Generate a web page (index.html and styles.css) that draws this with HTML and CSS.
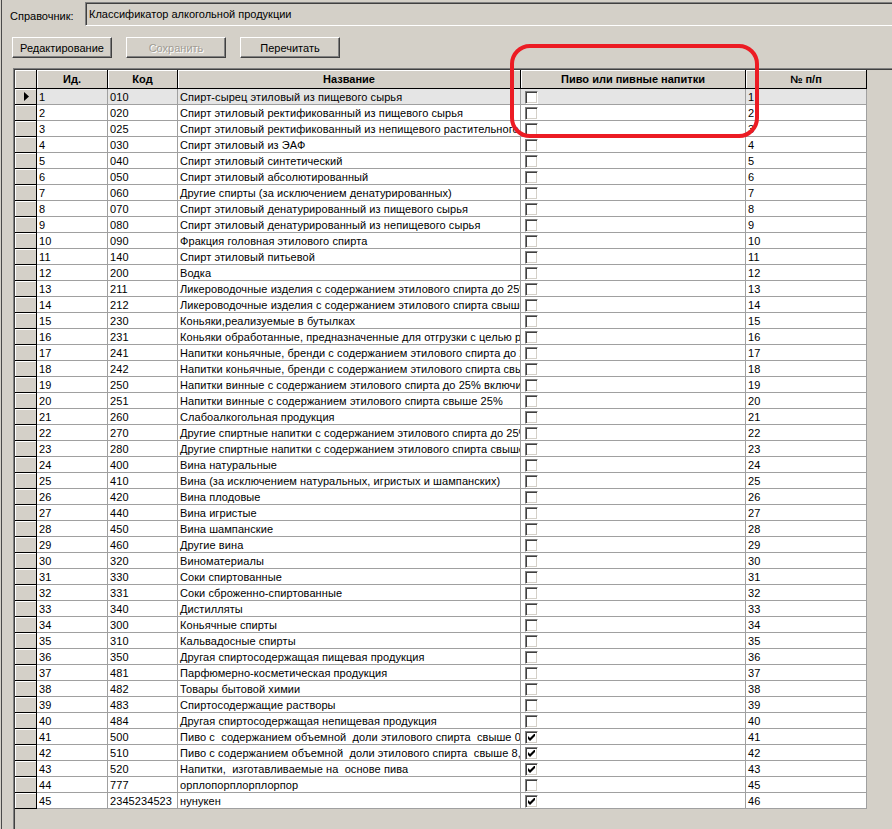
FILE: index.html
```html
<!DOCTYPE html>
<html lang="ru">
<head>
    <meta charset="UTF-8">
    <meta name="viewport" content="width=device-width, initial-scale=1.0">
    <title>Справочник</title>
    <link rel="stylesheet" href="styles.css">
</head>
<body>
<div class="window">
    <div class="topbar">
        <span class="label">Справочник:</span>
        <div class="field">Классификатор алкогольной продукции</div>
    </div>
    <div class="toolbar">
        <button>Редактирование</button>
        <button disabled>Сохранить</button>
        <button>Перечитать</button>
    </div>
    <div class="grid">
        <div class="row head"><div class="fix"></div><div class="h">Ид.</div><div class="h">Код</div><div class="h">Название</div><div class="h">Пиво или пивные напитки</div><div class="h">№ п/п</div></div>
        <div class="row sel"><div class="fix"><svg width="5" height="9" viewBox="0 0 5 9"><polygon points="0,0 5,4.5 0,9" fill="#000"/></svg></div><div class="c">1</div><div class="c">010</div><div class="c">Спирт-сырец этиловый из пищевого сырья</div><div class="c"><span class="chk"></span></div><div class="c">1</div></div>
        <div class="row"><div class="fix"></div><div class="c">2</div><div class="c">020</div><div class="c">Спирт этиловый ректификованный из пищевого сырья</div><div class="c"><span class="chk"></span></div><div class="c">2</div></div>
        <div class="row"><div class="fix"></div><div class="c">3</div><div class="c">025</div><div class="c">Спирт этиловый ректификованный из непищевого растительного сырья</div><div class="c"><span class="chk"></span></div><div class="c">3</div></div>
        <div class="row"><div class="fix"></div><div class="c">4</div><div class="c">030</div><div class="c">Спирт этиловый из ЭАФ</div><div class="c"><span class="chk"></span></div><div class="c">4</div></div>
        <div class="row"><div class="fix"></div><div class="c">5</div><div class="c">040</div><div class="c">Спирт этиловый синтетический</div><div class="c"><span class="chk"></span></div><div class="c">5</div></div>
        <div class="row"><div class="fix"></div><div class="c">6</div><div class="c">050</div><div class="c">Спирт этиловый абсолютированный</div><div class="c"><span class="chk"></span></div><div class="c">6</div></div>
        <div class="row"><div class="fix"></div><div class="c">7</div><div class="c">060</div><div class="c">Другие спирты (за исключением денатурированных)</div><div class="c"><span class="chk"></span></div><div class="c">7</div></div>
        <div class="row"><div class="fix"></div><div class="c">8</div><div class="c">070</div><div class="c">Спирт этиловый денатурированный из пищевого сырья</div><div class="c"><span class="chk"></span></div><div class="c">8</div></div>
        <div class="row"><div class="fix"></div><div class="c">9</div><div class="c">080</div><div class="c">Спирт этиловый денатурированный из непищевого сырья</div><div class="c"><span class="chk"></span></div><div class="c">9</div></div>
        <div class="row"><div class="fix"></div><div class="c">10</div><div class="c">090</div><div class="c">Фракция головная этилового спирта</div><div class="c"><span class="chk"></span></div><div class="c">10</div></div>
        <div class="row"><div class="fix"></div><div class="c">11</div><div class="c">140</div><div class="c">Спирт этиловый питьевой</div><div class="c"><span class="chk"></span></div><div class="c">11</div></div>
        <div class="row"><div class="fix"></div><div class="c">12</div><div class="c">200</div><div class="c">Водка</div><div class="c"><span class="chk"></span></div><div class="c">12</div></div>
        <div class="row"><div class="fix"></div><div class="c">13</div><div class="c">211</div><div class="c">Ликероводочные изделия с содержанием этилового спирта до 25% включительно</div><div class="c"><span class="chk"></span></div><div class="c">13</div></div>
        <div class="row"><div class="fix"></div><div class="c">14</div><div class="c">212</div><div class="c">Ликероводочные изделия с содержанием этилового спирта свыше 25%</div><div class="c"><span class="chk"></span></div><div class="c">14</div></div>
        <div class="row"><div class="fix"></div><div class="c">15</div><div class="c">230</div><div class="c">Коньяки,реализуемые в бутылках</div><div class="c"><span class="chk"></span></div><div class="c">15</div></div>
        <div class="row"><div class="fix"></div><div class="c">16</div><div class="c">231</div><div class="c">Коньяки обработанные, предназначенные для отгрузки с целью розлива</div><div class="c"><span class="chk"></span></div><div class="c">16</div></div>
        <div class="row"><div class="fix"></div><div class="c">17</div><div class="c">241</div><div class="c">Напитки коньячные, бренди с содержанием этилового спирта до 25%</div><div class="c"><span class="chk"></span></div><div class="c">17</div></div>
        <div class="row"><div class="fix"></div><div class="c">18</div><div class="c">242</div><div class="c">Напитки коньячные, бренди с содержанием этилового спирта свыше 25%</div><div class="c"><span class="chk"></span></div><div class="c">18</div></div>
        <div class="row"><div class="fix"></div><div class="c">19</div><div class="c">250</div><div class="c">Напитки винные с содержанием этилового спирта до 25% включительно</div><div class="c"><span class="chk"></span></div><div class="c">19</div></div>
        <div class="row"><div class="fix"></div><div class="c">20</div><div class="c">251</div><div class="c">Напитки винные с содержанием этилового спирта свыше 25%</div><div class="c"><span class="chk"></span></div><div class="c">20</div></div>
        <div class="row"><div class="fix"></div><div class="c">21</div><div class="c">260</div><div class="c">Слабоалкогольная продукция</div><div class="c"><span class="chk"></span></div><div class="c">21</div></div>
        <div class="row"><div class="fix"></div><div class="c">22</div><div class="c">270</div><div class="c">Другие спиртные напитки с содержанием этилового спирта до 25% включительно</div><div class="c"><span class="chk"></span></div><div class="c">22</div></div>
        <div class="row"><div class="fix"></div><div class="c">23</div><div class="c">280</div><div class="c">Другие спиртные напитки с содержанием этилового спирта свыше 25%</div><div class="c"><span class="chk"></span></div><div class="c">23</div></div>
        <div class="row"><div class="fix"></div><div class="c">24</div><div class="c">400</div><div class="c">Вина натуральные</div><div class="c"><span class="chk"></span></div><div class="c">24</div></div>
        <div class="row"><div class="fix"></div><div class="c">25</div><div class="c">410</div><div class="c">Вина (за исключением натуральных, игристых и шампанских)</div><div class="c"><span class="chk"></span></div><div class="c">25</div></div>
        <div class="row"><div class="fix"></div><div class="c">26</div><div class="c">420</div><div class="c">Вина плодовые</div><div class="c"><span class="chk"></span></div><div class="c">26</div></div>
        <div class="row"><div class="fix"></div><div class="c">27</div><div class="c">440</div><div class="c">Вина игристые</div><div class="c"><span class="chk"></span></div><div class="c">27</div></div>
        <div class="row"><div class="fix"></div><div class="c">28</div><div class="c">450</div><div class="c">Вина шампанские</div><div class="c"><span class="chk"></span></div><div class="c">28</div></div>
        <div class="row"><div class="fix"></div><div class="c">29</div><div class="c">460</div><div class="c">Другие вина</div><div class="c"><span class="chk"></span></div><div class="c">29</div></div>
        <div class="row"><div class="fix"></div><div class="c">30</div><div class="c">320</div><div class="c">Виноматериалы</div><div class="c"><span class="chk"></span></div><div class="c">30</div></div>
        <div class="row"><div class="fix"></div><div class="c">31</div><div class="c">330</div><div class="c">Соки спиртованные</div><div class="c"><span class="chk"></span></div><div class="c">31</div></div>
        <div class="row"><div class="fix"></div><div class="c">32</div><div class="c">331</div><div class="c">Соки сброженно-спиртованные</div><div class="c"><span class="chk"></span></div><div class="c">32</div></div>
        <div class="row"><div class="fix"></div><div class="c">33</div><div class="c">340</div><div class="c">Дистилляты</div><div class="c"><span class="chk"></span></div><div class="c">33</div></div>
        <div class="row"><div class="fix"></div><div class="c">34</div><div class="c">300</div><div class="c">Коньячные спирты</div><div class="c"><span class="chk"></span></div><div class="c">34</div></div>
        <div class="row"><div class="fix"></div><div class="c">35</div><div class="c">310</div><div class="c">Кальвадосные спирты</div><div class="c"><span class="chk"></span></div><div class="c">35</div></div>
        <div class="row"><div class="fix"></div><div class="c">36</div><div class="c">350</div><div class="c">Другая спиртосодержащая пищевая продукция</div><div class="c"><span class="chk"></span></div><div class="c">36</div></div>
        <div class="row"><div class="fix"></div><div class="c">37</div><div class="c">481</div><div class="c">Парфюмерно-косметическая продукция</div><div class="c"><span class="chk"></span></div><div class="c">37</div></div>
        <div class="row"><div class="fix"></div><div class="c">38</div><div class="c">482</div><div class="c">Товары бытовой химии</div><div class="c"><span class="chk"></span></div><div class="c">38</div></div>
        <div class="row"><div class="fix"></div><div class="c">39</div><div class="c">483</div><div class="c">Спиртосодержащие растворы</div><div class="c"><span class="chk"></span></div><div class="c">39</div></div>
        <div class="row"><div class="fix"></div><div class="c">40</div><div class="c">484</div><div class="c">Другая спиртосодержащая непищевая продукция</div><div class="c"><span class="chk"></span></div><div class="c">40</div></div>
        <div class="row"><div class="fix"></div><div class="c">41</div><div class="c">500</div><div class="c">Пиво с  содержанием объемной  доли этилового спирта  свыше 0,5% до 8,6%</div><div class="c"><span class="chk"><svg width="7" height="7" viewBox="0 0 7 7"><polygon points="0,2 2,4 7,-1 7,2 2,7 0,5" fill="#000"/></svg></span></div><div class="c">41</div></div>
        <div class="row"><div class="fix"></div><div class="c">42</div><div class="c">510</div><div class="c">Пиво с содержанием объемной  доли этилового спирта  свыше 8,6%</div><div class="c"><span class="chk"><svg width="7" height="7" viewBox="0 0 7 7"><polygon points="0,2 2,4 7,-1 7,2 2,7 0,5" fill="#000"/></svg></span></div><div class="c">42</div></div>
        <div class="row"><div class="fix"></div><div class="c">43</div><div class="c">520</div><div class="c">Напитки,  изготавливаемые на  основе пива</div><div class="c"><span class="chk"><svg width="7" height="7" viewBox="0 0 7 7"><polygon points="0,2 2,4 7,-1 7,2 2,7 0,5" fill="#000"/></svg></span></div><div class="c">43</div></div>
        <div class="row"><div class="fix"></div><div class="c">44</div><div class="c">777</div><div class="c">орплопорплорплорпор</div><div class="c"><span class="chk"></span></div><div class="c">45</div></div>
        <div class="row"><div class="fix"></div><div class="c">45</div><div class="c">2345234523</div><div class="c">нунукен</div><div class="c"><span class="chk"><svg width="7" height="7" viewBox="0 0 7 7"><polygon points="0,2 2,4 7,-1 7,2 2,7 0,5" fill="#000"/></svg></span></div><div class="c">46</div></div>
    </div>
    <div class="mark"></div>
</div>
</body>
</html>
```

FILE: styles.css
```css
body {
    margin: 0;
    background-color: #d4d0c8;
    font-family: "Liberation Sans", Arial, sans-serif;
    font-size: 11px;
    color: #000;
}
.window {
    position: relative;
    display: flex;
    flex-direction: column;
    height: 100vh;
    margin-left: 1px;
    border-left: 1px solid #4a4a4a;
    overflow: hidden;
}
.topbar {
    display: flex;
    align-items: center;
    padding: 2px 0 0 8px;
}
.label {
    width: 75px;
    flex-shrink: 0;
    padding-top: 3px;
}
.field {
    flex: 1;
    height: 24px;
    box-sizing: border-box;
    margin-right: -10px;
    padding: 2px 0 0 3px;
    line-height: 18px;
    border-top: 1px solid #808080;
    border-left: 1px solid #808080;
    border-bottom: 1px solid #fff;
    box-shadow: inset 1px 1px #404040;
}
.toolbar {
    display: flex;
    gap: 14px;
    margin-top: 11px;
    padding-left: 10px;
}
button {
    width: 100px;
    height: 21px;
    padding: 0;
    font-family: inherit;
    font-size: 11px;
    color: #000;
    background-color: #d4d0c8;
    border: 1px solid;
    border-color: #fff #404040 #404040 #fff;
    box-shadow: inset -1px -1px #808080;
    border-radius: 0;
}
button:disabled {
    color: #a09c94;
    text-shadow: 1px 1px #fff;
}
.grid {
    flex: 1;
    margin: 10px -20px 0 11px;
    padding: 1px 0 0 1px;
    border-top: 1px solid #808080;
    border-left: 1px solid #808080;
    box-shadow: inset 1px 1px #404040;
}
.row {
    display: grid;
    grid-template-columns: 22px 71px 70px 343px 225px 121px;
    height: 16px;
}
.row.head {
    height: 19px;
}
.row > div {
    box-sizing: border-box;
    overflow: hidden;
    white-space: pre;
}
.fix, .h {
    background-color: #d4d0c8;
    border-right: 1px solid #000;
    border-bottom: 1px solid #000;
    box-shadow: inset 1px 1px #fff;
}
.fix {
    display: flex;
    align-items: center;
    justify-content: center;
    padding-left: 2px;
}
.h {
    font-weight: bold;
    text-align: center;
    line-height: 19px;
}
.c {
    background-color: #fff;
    border-right: 1px solid #a0a0a0;
    border-bottom: 1px solid #a0a0a0;
    padding: 1px 0 0 2px;
    line-height: 14px;
    letter-spacing: 0.08px;
}
.sel .c {
    background-color: #e5e5e5;
}
.chk {
    display: flex;
    align-items: center;
    justify-content: center;
    width: 13px;
    height: 13px;
    box-sizing: border-box;
    margin: 1px 0 0 2px;
    background-color: #fff;
    border: 1px solid;
    border-color: #808080 #fff #fff #808080;
    box-shadow: inset 1px 1px #404040, inset -1px -1px #d4d0c8;
}
.mark {
    position: absolute;
    left: 508px;
    top: 44px;
    width: 241px;
    height: 86px;
    border: 4px solid #ec1c24;
    border-radius: 20px;
}
```
